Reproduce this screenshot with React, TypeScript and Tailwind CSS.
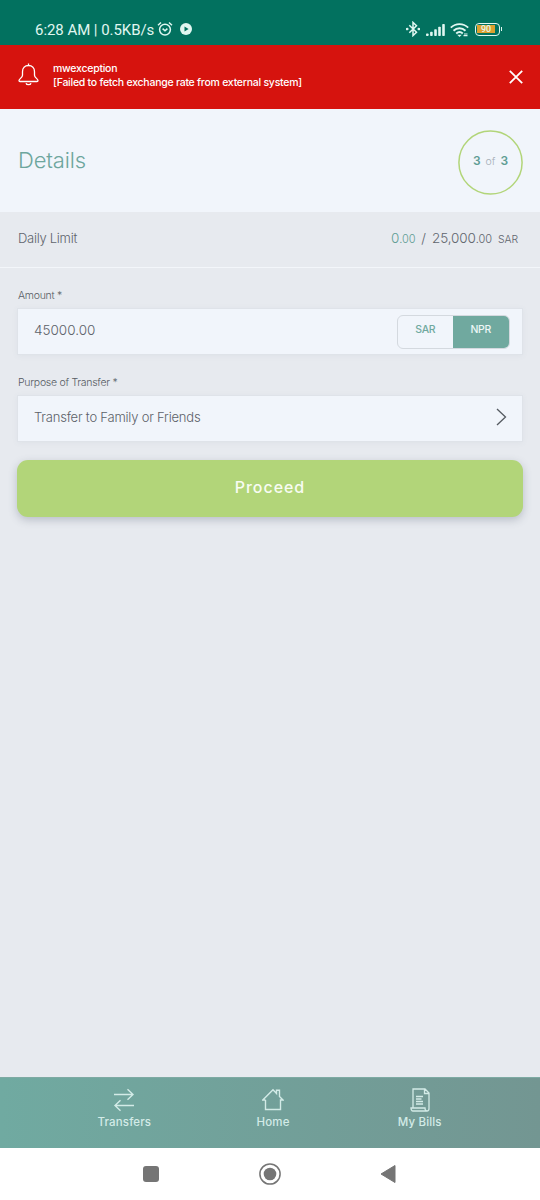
import { useState } from "react";
import clsx from "clsx";

type Currency = "SAR" | "NPR";

const CURRENCIES: Currency[] = ["SAR", "NPR"];

function StatusBar() {
  return (
    <div className="flex h-[45px] items-end justify-between bg-[#02715f] pr-[37px] pb-[6px] pl-[35px] font-['Roboto',sans-serif] text-[#e0f7f1]">
      <div className="flex h-5 items-center">
        <span className="mt-px w-[122px] text-[15px] leading-5 tracking-[-0.05px] whitespace-nowrap">
          6:28 AM | 0.5KB/s
        </span>
        <svg width="16" height="16" viewBox="0 0 16 16" fill="none" stroke="currentColor" strokeWidth="1.5">
          <circle cx="8" cy="8.6" r="5.4" />
          <path d="M1 4.2 4 1.5M15 4.2l-3-2.7M5.6 7.6 8 9.8l2.4-2.2" />
        </svg>
        <svg className="ml-[7px]" width="12" height="12" viewBox="0 0 12 12">
          <circle cx="6" cy="6" r="6" fill="currentColor" />
          <path d="M4.5 3.5v5L8.6 6z" fill="#02715f" />
        </svg>
      </div>
      <div className="flex h-5 items-center">
        <svg width="14" height="16" viewBox="0 0 14 16" fill="none" stroke="currentColor" strokeWidth="1.5">
          <path d="m3.3 4.3 7.2 7L7 14.6V1.4l3.5 3.3-7.2 7" />
          <circle cx="1.2" cy="8" r=".6" fill="currentColor" />
          <circle cx="12.8" cy="8" r=".6" fill="currentColor" />
        </svg>
        <svg className="mt-px ml-[6px]" width="19" height="12" viewBox="0 0 19 12" fill="currentColor">
          <rect x="0" y="9.5" width="2.6" height="2.5" rx=".8" />
          <rect x="4.1" y="7.8" width="2.6" height="4.2" rx=".8" />
          <rect x="8.2" y="5.3" width="2.6" height="6.7" rx=".8" />
          <rect x="12.2" y="2.7" width="2.6" height="9.3" rx=".8" />
          <rect x="16.2" y="0" width="2.6" height="12" rx=".8" />
        </svg>
        <svg className="mt-px ml-[5px]" width="19" height="14" viewBox="0 0 19 14" fill="none" stroke="currentColor" strokeWidth="1.9">
          <path d="M.8 4.6c5-4.7 12.4-4.7 17.4 0M3.5 7.7c3.5-3.3 8.5-3.3 12 0M6.2 10.5c2-1.8 4.6-1.8 6.6 0" />
          <path d="m7.2 11.8 2.3 2.2 2.3-2.2z" fill="currentColor" stroke="none" />
          <path d="M13.5 12.6h4M14 11h3.5" strokeWidth="1.1" />
        </svg>
        <div className="ml-[6px] flex h-[13px] w-[25px] items-center rounded-[4px] border-[1.5px] border-current p-[1.5px]">
          <div className="flex h-full w-[18px] items-center justify-center bg-[#dda02e] text-[9px] leading-none font-medium">
            90
          </div>
        </div>
        <div className="mr-px ml-px h-[4px] w-[1.5px] bg-current" />
      </div>
    </div>
  );
}

function ErrorBanner() {
  return (
    <div className="flex h-16 items-center bg-[#d6130e] pr-[17px] pl-[18px] text-white">
      <svg width="21" height="23" viewBox="0 0 21 23" fill="none" stroke="currentColor" strokeWidth="1.3" strokeLinejoin="round" className="mb-[5px]">
        <path d="M10.5 .5v2M10.5 2.5c-3.700 0-6 2.600-6 6.200v3.600c0 2.300-3.500 3.600-3.500 5.200 0 .6.400 1 1 1h17c.6 0 1-.4 1-1 0-1.600-3.500-2.900-3.500-5.200V8.700c0-3.600-2.300-6.200-6-6.200Z" />
        <path d="M8 20.200c.6 2 4.400 2 5 0" />
      </svg>
      <div className="mb-[2px] ml-[14px] flex-1 text-[10.5px] leading-[14.5px] font-medium tracking-[-0.25px] whitespace-nowrap">
        <p>mwexception</p>
        <p>[Failed to fetch exchange rate from external system]</p>
      </div>
      <button type="button" aria-label="Dismiss">
        <svg width="14" height="14" viewBox="0 0 14 14" stroke="currentColor" strokeWidth="1.8">
          <path d="m.8.8 12.400 12.400M13.200.8.8 13.200" />
        </svg>
      </button>
    </div>
  );
}

function StepHeader() {
  return (
    <div className="flex h-[103px] items-center justify-between bg-[#f1f5fb] pr-[17px] pl-[18px]">
      <h1 className="text-[22px] font-light tracking-[-0.15px] text-[#6da69d]">Details</h1>
      <div className="relative mt-[3px] flex h-[65px] w-[65px] items-center justify-center text-[12px] text-[#5f9d94]">
        <svg className="absolute inset-0" width="65" height="65" viewBox="0 0 65 65" fill="none">
          <circle cx="32.5" cy="32.5" r="31.6" stroke="#b2d579" strokeWidth="1.5" />
        </svg>
        <p className="mb-[3px] flex items-baseline gap-[5px]">
          <span className="font-semibold">3</span>
          <span className="text-[10.5px] font-light text-[#a5aeb7]">of</span>
          <span className="font-semibold">3</span>
        </p>
      </div>
    </div>
  );
}

function DailyLimit() {
  return (
    <div className="flex h-14 items-center justify-between border-b border-[#f3f6fa] pr-[22px] pb-[2px] pl-[18px] font-light text-[#60656d]">
      <span className="text-[13px] tracking-[-0.28px]">Daily Limit</span>
      <p className="flex items-baseline text-[13.5px] tracking-[-0.1px]">
        <span className="text-[#5f9d94]">
          0<span className="text-[11px]">.00</span>
        </span>
        <span className="mx-[6px]">/</span>
        <span>
          25,000<span className="text-[11px]">.00</span>
        </span>
        <span className="ml-[6px] text-[10.5px]">SAR</span>
      </p>
    </div>
  );
}

function CurrencyToggle() {
  const [currency, setCurrency] = useState<Currency>("NPR");

  return (
    <div className="flex h-[34px] w-[113px] overflow-hidden rounded-[6px] border border-[#d4d9df]">
      {CURRENCIES.map((c) => (
        <button
          key={c}
          type="button"
          onClick={() => setCurrency(c)}
          className={clsx(
            "flex-1 pb-[3px] text-[10.5px] font-medium tracking-[-0.3px]",
            c === currency ? "bg-[#70a99f] text-[#edf6f6]" : "text-[#70a99f]"
          )}
        >
          {c}
        </button>
      ))}
    </div>
  );
}

function TransferForm() {
  return (
    <div className="flex-1 px-[17px] pt-5">
      <p className="ml-px text-[10.5px] leading-[15px] font-light tracking-[-0.27px] text-[#565b63]">Amount *</p>
      <div className="mt-[5px] flex h-[47px] items-center justify-between border border-[#dfe3e9] bg-[#f1f5fb] pr-[12.5px] pl-4 shadow-[0_1px_6px_rgba(90,100,120,0.06)]">
        <span className="mb-[3px] text-[13.5px] font-light text-[#5c6169]">45000.00</span>
        <CurrencyToggle />
      </div>
      <p className="mt-5 ml-px text-[10.5px] leading-[15px] font-light tracking-[-0.27px] text-[#565b63]">Purpose of Transfer *</p>
      <button
        type="button"
        className="mt-[5px] flex h-[47px] w-full items-center justify-between border border-[#dfe3e9] bg-[#f1f5fb] pr-[15px] pl-4 shadow-[0_1px_6px_rgba(90,100,120,0.06)]"
      >
        <span className="mb-px text-[13px] font-light tracking-[-0.21px] text-[#5c6169]">Transfer to Family or Friends</span>
        <svg className="mb-[4px]" width="11" height="18" viewBox="0 0 11 18" fill="none" stroke="#555a61" strokeWidth="1.3">
          <path d="m1 1 8.500 8L1 17" />
        </svg>
      </button>
      <button
        type="button"
        className="mt-[18px] h-[57px] w-full rounded-[11px] bg-[#b2d579] pb-[4px] text-[16px] font-medium tracking-[0.95px] text-[#f8fcf3] shadow-[0_3px_8px_rgba(80,90,110,0.3)]"
      >
        Proceed
      </button>
    </div>
  );
}

function TabBar() {
  return (
    <nav className="flex h-[71px] border-t border-[#7eaaa3] bg-linear-to-r from-[#70aaa1] to-[#739692] pr-[46px] pl-[51px] text-[11.5px] font-medium tracking-[0.15px] text-[#d3ebe7]">
      <a className="flex flex-1 flex-col items-center pt-[10px]">
        <svg width="22" height="24" viewBox="0 0 22 24" fill="none" stroke="currentColor" strokeWidth="1.4">
          <path d="M1 6.500h19M14.500 1.200l5.500 5.300-5.500 5.300M21 17.500H2M7.500 12.200 2 17.500l5.500 5.300" />
        </svg>
        <span className="leading-5">Transfers</span>
      </a>
      <a className="flex flex-1 flex-col items-center pt-[10px] pl-[2px]">
        <svg width="22" height="24" viewBox="0 0 22 24" fill="none" stroke="currentColor" strokeWidth="1.4">
          <path d="M3.500 12v9.500h15V12H21l-3.500-3.500V2.200h-3v3.300L11 1.800.8 12h2.700" />
        </svg>
        <span className="leading-5">Home</span>
      </a>
      <a className="flex flex-1 flex-col items-center pt-[10px] pr-px">
        <svg width="20" height="24" viewBox="0 0 20 24" fill="none" stroke="currentColor" strokeWidth="1.3">
          <path d="M3 19.500V1h12l4 4v15.500c0 1.500-.8 2.500-2 2.500H3c-1.300 0-2-1.300-2-3h14c0 1.700.7 3 2 3M14.500 1v4.500H19M6 8.500h7M6 11h5.500M6 13.500h7M6 16h7" />
        </svg>
        <span className="leading-5">My Bills</span>
      </a>
    </nav>
  );
}

function SystemNav() {
  return (
    <div className="flex h-[52px] items-center justify-between bg-white pr-[144px] pl-[143px] text-[#757575]">
      <div className="h-4 w-4 rounded-[3px] bg-current" />
      <svg width="22" height="22" viewBox="0 0 22 22">
        <circle cx="11" cy="11" r="10.1" fill="none" stroke="currentColor" strokeWidth="1.5" />
        <circle cx="11" cy="11" r="6.3" fill="currentColor" />
      </svg>
      <svg width="16" height="20" viewBox="0 0 16 20">
        <path d="M1 10 15 1.500v17z" fill="currentColor" stroke="currentColor" strokeLinejoin="round" />
      </svg>
    </div>
  );
}

export default function App() {
  return (
    <div className="flex h-[1200px] w-[540px] flex-col overflow-hidden bg-[#e7eaef] font-['Inter',sans-serif]">
      <StatusBar />
      <ErrorBanner />
      <StepHeader />
      <DailyLimit />
      <TransferForm />
      <TabBar />
      <SystemNav />
    </div>
  );
}
